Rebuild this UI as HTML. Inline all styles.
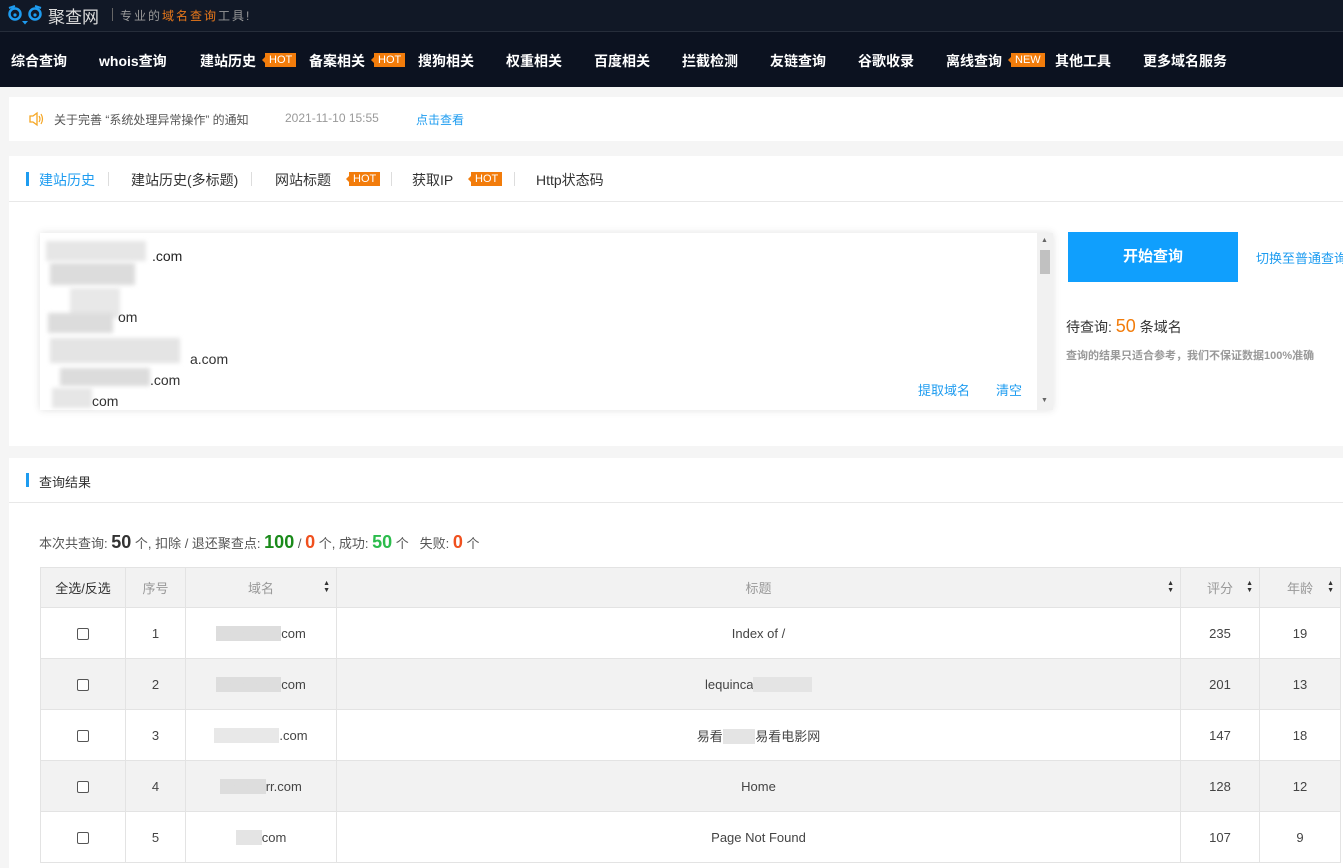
<!DOCTYPE html>
<html><head><meta charset="utf-8"><style>
*{margin:0;padding:0;box-sizing:border-box}
body{width:1343px;height:861px;overflow:hidden;background:#f5f5f5;font-family:"Liberation Sans","Noto Sans CJK SC",sans-serif;font-size:13px;color:#333;position:relative}
.abs{position:absolute}
.top{left:0;top:0;width:1343px;height:32px;background:#111826;border-bottom:1px solid #262d3a}
.nav{left:0;top:32px;width:1343px;height:55px;background:#0c1220}
.nav span{position:absolute;top:19px;color:#fff;font-weight:bold;font-size:14px;white-space:nowrap}
.hot{position:absolute;background:#f27c0b;color:#fff;font-size:11px;line-height:14px;padding:0 4px;font-weight:normal;font-style:normal}
.hot:before{content:"";position:absolute;left:-3px;top:4px;border-top:3px solid transparent;border-bottom:3px solid transparent;border-right:3px solid #f27c0b}
.panel{background:#fff;left:9px;width:1334px}
.blur{position:absolute;background:#ddd;filter:blur(2px)}
table{border-collapse:collapse;position:absolute;left:40px;top:567px;width:1301px;table-layout:fixed}
td,th{border:1px solid #e3e3e3;text-align:center;font-weight:normal;font-size:13px;color:#444;height:51px}
th{background:#f2f2f2;color:#999;height:40px;position:relative}
tr:nth-child(odd) td{background:#f2f2f2}
.cb{display:inline-block;width:12px;height:12px;border:1px solid #555;border-radius:2px;background:#fff;vertical-align:middle}
.sort{position:absolute;right:6px;top:12px;font-size:7px;line-height:7px;color:#333}
</style></head><body>
<div class="abs top">
<svg class="abs" style="left:8px;top:3px" width="36" height="22" viewBox="0 0 36 22"><circle cx="7" cy="11" r="5.5" fill="none" stroke="#1e9cf0" stroke-width="2.5"/><circle cx="27" cy="11" r="5.5" fill="none" stroke="#1e9cf0" stroke-width="2.5"/><circle cx="7" cy="12" r="1.6" fill="#1e9cf0"/><circle cx="27" cy="12" r="1.6" fill="#1e9cf0"/><path d="M1 5 L7 3 M33 5 L27 3" stroke="#1e9cf0" stroke-width="2"/><path d="M14 18 L20 18 L17 21.5Z" fill="#1e9cf0"/></svg>
<div class="abs" style="left:48px;top:3px;color:#ddd;font-size:17px">聚查网</div>
<div class="abs" style="left:112px;top:8px;width:1px;height:13px;background:#666"></div>
<div class="abs" style="left:120px;top:7px;font-size:12px;color:#999;letter-spacing:2px">专业的<span style="color:#e8781a">域名查询</span>工具!</div>
</div>
<div class="abs nav">
<span style="left:11px">综合查询</span><span style="left:99px">whois查询</span><span style="left:200px">建站历史</span><i class="hot" style="left:265px;top:21px">HOT</i>
<span style="left:309px">备案相关</span><i class="hot" style="left:374px;top:21px">HOT</i>
<span style="left:418px">搜狗相关</span><span style="left:506px">权重相关</span><span style="left:594px">百度相关</span><span style="left:682px">拦截检测</span><span style="left:770px">友链查询</span><span style="left:858px">谷歌收录</span><span style="left:946px">离线查询</span><i class="hot" style="left:1011px;top:21px">NEW</i><span style="left:1055px">其他工具</span><span style="left:1143px">更多域名服务</span>
</div>
<div class="abs panel" style="top:97px;height:44px">
<svg class="abs" style="left:19px;top:14px" width="16" height="16" viewBox="0 0 16 16"><path d="M2 5h3l4-3v12l-4-3H2z" fill="none" stroke="#f5a623" stroke-width="1.3"/><path d="M11 5q2 3 0 6M13 3q3 5 0 10" fill="none" stroke="#f5a623" stroke-width="1.2"/></svg>
<div class="abs" style="left:45px;top:14px;color:#555;font-size:12px">关于完善 “系统处理异常操作” 的通知</div>
<div class="abs" style="left:276px;top:14px;color:#999;font-size:12px">2021-11-10 15:55</div>
<div class="abs" style="left:407px;top:14px;color:#1e9cf0;font-size:12px">点击查看</div>
</div>
<div class="abs panel" style="top:156px;height:290px">
<div class="abs" style="left:0;top:45px;width:1334px;height:1px;background:#e8e8e8"></div>
<div class="abs" style="left:17px;top:16px;width:3px;height:14px;background:#1e9cf0"></div>
<div class="abs" style="left:30px;top:14px;font-size:14px;color:#1e9cf0">建站历史</div>
<div class="abs" style="left:99px;top:16px;width:1px;height:14px;background:#ddd"></div>
<div class="abs" style="left:122px;top:14px;font-size:14px">建站历史(多标题)</div>
<div class="abs" style="left:242px;top:16px;width:1px;height:14px;background:#ddd"></div>
<div class="abs" style="left:266px;top:14px;font-size:14px">网站标题</div><i class="hot" style="left:340px;top:16px">HOT</i>
<div class="abs" style="left:382px;top:16px;width:1px;height:14px;background:#ddd"></div>
<div class="abs" style="left:403px;top:14px;font-size:14px">获取IP</div><i class="hot" style="left:462px;top:16px">HOT</i>
<div class="abs" style="left:505px;top:16px;width:1px;height:14px;background:#ddd"></div>
<div class="abs" style="left:527px;top:14px;font-size:14px">Http状态码</div>
<div class="abs" style="left:31px;top:77px;width:1013px;height:177px;background:#fff;box-shadow:0 0 8px rgba(0,0,0,.12)">
<div class="blur" style="left:6px;top:8px;width:100px;height:20px;background:#e6e6e6"></div>
<div class="blur" style="left:10px;top:30px;width:85px;height:22px;background:#dcdcdc"></div>
<div class="blur" style="left:30px;top:55px;width:50px;height:30px;background:#e8e8e8"></div>
<div class="blur" style="left:8px;top:80px;width:65px;height:20px;background:#dcdcdc"></div>
<div class="blur" style="left:10px;top:105px;width:130px;height:25px;background:#e4e4e4"></div>
<div class="blur" style="left:20px;top:135px;width:90px;height:18px;background:#dcdcdc"></div>
<div class="blur" style="left:12px;top:155px;width:40px;height:20px;background:#e6e6e6"></div>
<div class="abs" style="left:112px;top:13px;font-size:14px;color:#222;line-height:21px">.com</div>
<div class="abs" style="left:78px;top:76px;font-size:14px">om</div>
<div class="abs" style="left:150px;top:118px;font-size:14px">a.com</div>
<div class="abs" style="left:110px;top:139px;font-size:14px">.com</div>
<div class="abs" style="left:52px;top:160px;font-size:14px">com</div>
<div class="abs" style="left:878px;top:147px;color:#1e9cf0">提取域名</div>
<div class="abs" style="left:956px;top:147px;color:#1e9cf0">清空</div>
<div class="abs" style="right:0;top:0;width:16px;height:177px;background:#f1f1f1"><div class="abs" style="left:3px;top:17px;width:10px;height:24px;background:#c1c1c1"></div><div class="abs" style="left:4px;top:4px;font-size:7px;color:#666">▲</div><div class="abs" style="left:4px;top:164px;font-size:7px;color:#666">▼</div></div>
</div>
<div class="abs" style="left:1059px;top:76px;width:170px;height:50px;background:#109ffd;color:#fff;font-size:15px;font-weight:bold;text-align:center;line-height:50px">开始查询</div>
<div class="abs" style="left:1247px;top:92px;color:#1e9cf0;font-size:13px;white-space:nowrap">切换至普通查询</div>
<div class="abs" style="left:1057px;top:160px;font-size:14px">待查询: <span style="color:#f27c0b;font-size:18px">50</span> 条域名</div>
<div class="abs" style="left:1057px;top:191px;font-size:11px;color:#999;font-weight:bold;white-space:nowrap">查询的结果只适合参考，我们不保证数据100%准确</div>
</div>
<div class="abs panel" style="top:458px;height:410px">
<div class="abs" style="left:0;top:44px;width:1334px;height:1px;background:#e8e8e8"></div>
<div class="abs" style="left:17px;top:15px;width:3px;height:14px;background:#1e9cf0"></div>
<div class="abs" style="left:30px;top:14px;font-size:13px">查询结果</div>
<div class="abs" style="left:30px;top:74px;font-size:13px;color:#555;white-space:nowrap">本次共查询: <b style="font-size:18px;color:#333">50</b> 个, 扣除 / 退还聚查点: <b style="font-size:18px;color:#1a8a1a">100</b> / <b style="font-size:18px;color:#f0501e">0</b> 个, 成功: <b style="font-size:18px;color:#2bbc4c">50</b> 个 &nbsp; 失败: <b style="font-size:18px;color:#f0501e">0</b> 个</div>
</div>
<table>
<tr><th style="width:85px;color:#333">全选/反选</th><th style="width:60px">序号</th><th style="width:151px">域名<span class="sort">▲<br>▼</span></th><th style="width:844px">标题<span class="sort">▲<br>▼</span></th><th style="width:79px">评分<span class="sort">▲<br>▼</span></th><th>年龄<span class="sort">▲<br>▼</span></th></tr>
<tr><td><span class="cb"></span></td><td>1</td><td><span style="background:#ddd;color:#ddd">xxxxxxxxxx</span>com</td><td>Index of /</td><td>235</td><td>19</td></tr>
<tr><td><span class="cb"></span></td><td>2</td><td><span style="background:#ddd;color:#ddd">xxxxxxxxxx</span>com</td><td>lequinca<span style="background:#e4e4e4;color:#e4e4e4">xxxxxxxxx</span></td><td>201</td><td>13</td></tr>
<tr><td><span class="cb"></span></td><td>3</td><td><span style="background:#e8e8e8;color:#e8e8e8">xxxxxxxxxx</span>.com</td><td>易看<span style="background:#e4e4e4;color:#e4e4e4">xxxxx</span>易看电影网</td><td>147</td><td>18</td></tr>
<tr><td><span class="cb"></span></td><td>4</td><td><span style="background:#ddd;color:#ddd">xxxxxxx</span>rr.com</td><td>Home</td><td>128</td><td>12</td></tr>
<tr><td><span class="cb"></span></td><td>5</td><td><span style="background:#e4e4e4;color:#e4e4e4">xxxx</span>com</td><td>Page Not Found</td><td>107</td><td>9</td></tr>
</table>
</body></html>
